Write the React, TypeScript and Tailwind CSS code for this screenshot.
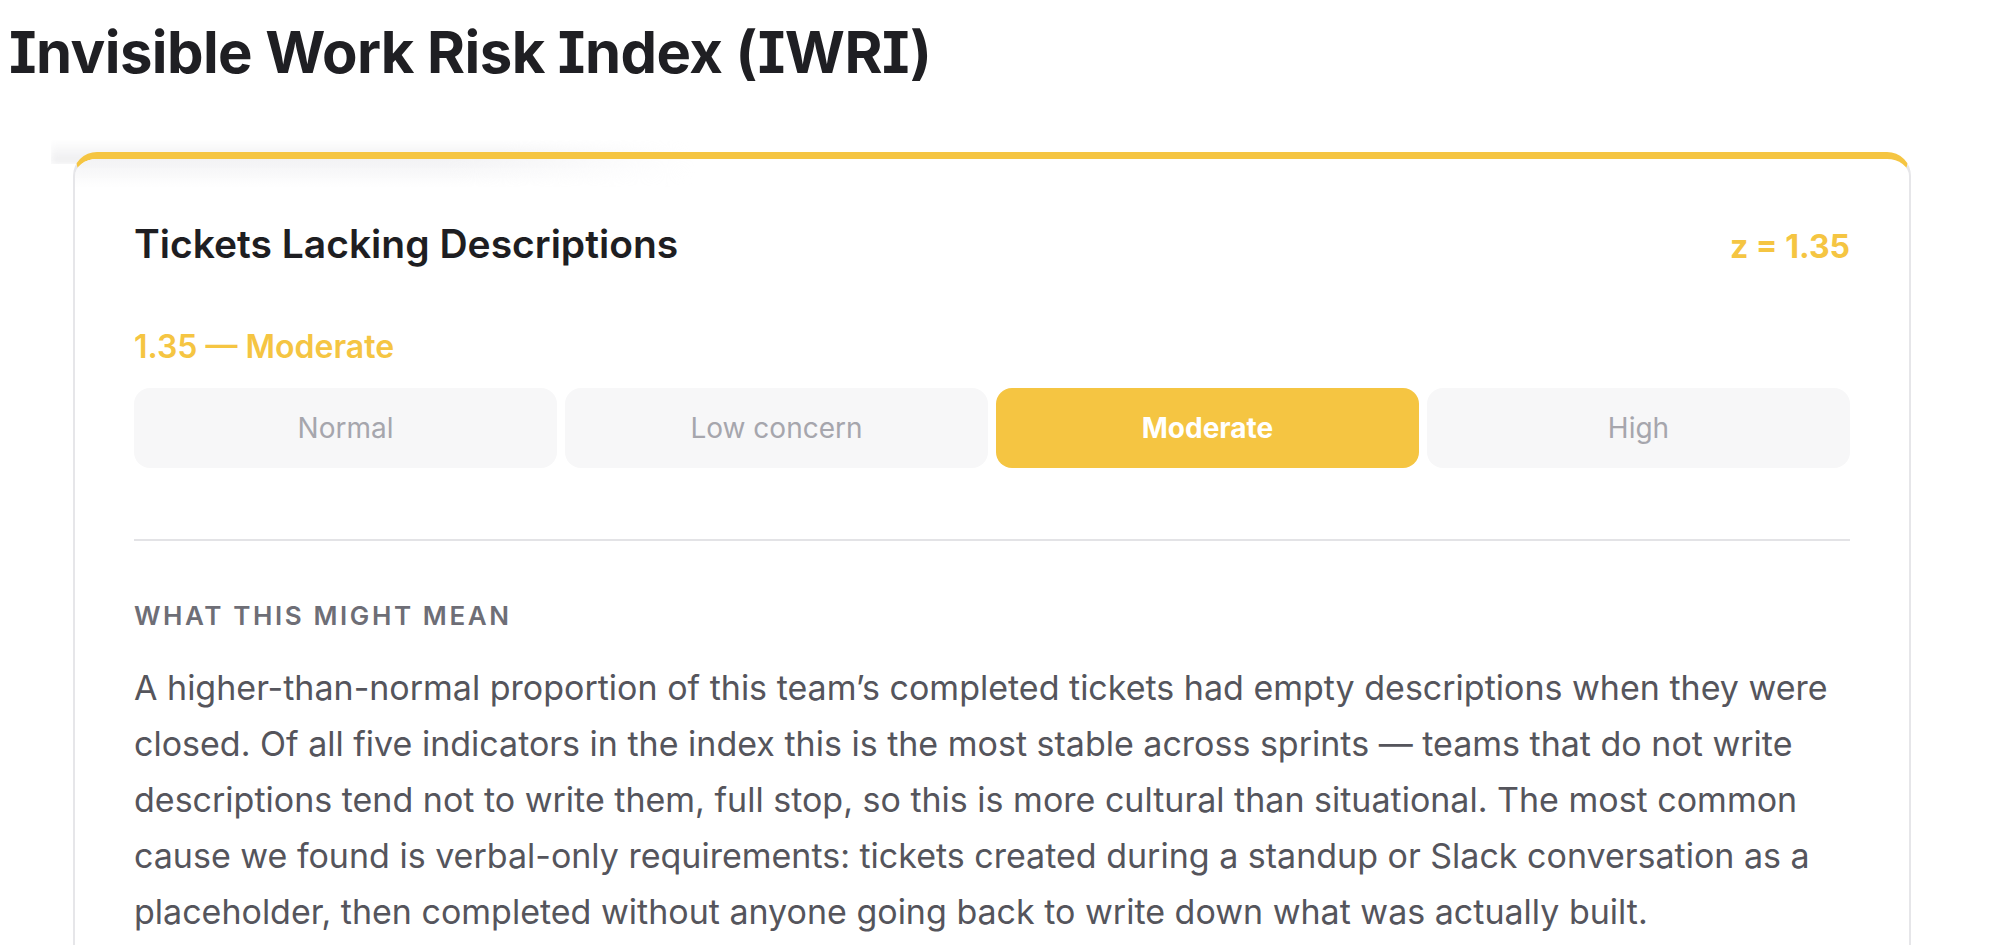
import React from "react";

// severity scale shown as a row of segments
const BANDS = ["Normal", "Low concern", "Moderate", "High"];

interface IIndicatorCardProps {
    title: string;
    z: number;
    band: string;
    lines: string[];
}

const IndicatorCard: React.FC<IIndicatorCardProps> = ({ title, z, band, lines }) => {
    return (
        <div className="relative w-[1838px] ml-[73px]">
            {/* soft haze behind the top edge */}
            <div className="absolute -top-[12px] -left-[22px] w-[640px] h-[24px] bg-linear-to-b from-transparent to-[#ececee] [mask-image:linear-gradient(to_right,black_70%,transparent)] blur-[3px]" />

            <div className="relative bg-white border-2 border-[#e6e6e9] border-t-[7px] border-t-[#f5c542] rounded-[24px] px-[59px] pt-[61px] pb-[80px] overflow-hidden">
                <div className="absolute top-0 left-0 w-[620px] h-[28px] bg-linear-to-b from-[#f2f2f4] to-transparent [mask-image:linear-gradient(to_right,black_60%,transparent)]" />

                {/* Header */}
                <div className="relative flex flex-row justify-between items-baseline">
                    <h2 className="text-[39px] leading-[48px] font-semibold text-[#1e1e22]">
                        {title}
                    </h2>
                    <span className="text-[32px] leading-[48px] font-bold text-[#f5c542]">
                        z = {z.toFixed(2)}
                    </span>
                </div>

                <div className="mt-[56px] text-[32px] leading-[40px] font-semibold text-[#f5c542]">
                    {z.toFixed(2)} — {band}
                </div>

                {/* Band segments */}
                <div className="mt-[21px] grid grid-cols-4 gap-[8px]">
                    {BANDS.map(b => (
                        <div
                            key={b}
                            className={
                                b === band
                                    ? "h-[80px] rounded-[16px] bg-[#f5c542] flex items-center justify-center text-[28px] font-bold text-white"
                                    : "h-[80px] rounded-[16px] bg-[#f7f7f8] flex items-center justify-center text-[28px] text-[#a6a6ad]"
                            }
                        >
                            {b}
                        </div>
                    ))}
                </div>

                <div className="mt-[71px] h-[2px] bg-[#e3e3e6]" />

                {/* Interpretation */}
                <div className="mt-[59px] text-[26px] leading-[32px] font-semibold tracking-[0.1em] text-[#6e6e76]">
                    WHAT THIS MIGHT MEAN
                </div>
                <p className="mt-[28px] text-[34px] leading-[56px] text-[#55555c]">
                    {lines.map((l, i) => (
                        <span key={i} className="block whitespace-nowrap">{l}</span>
                    ))}
                </p>
            </div>
        </div>
    );
};

export default function App() {
    return (
        <div className="min-h-screen bg-white font-['Inter','Noto_Sans',sans-serif] pt-[16px]">
            <h1 className="pl-[9px] text-[58px] leading-[72px] font-bold text-[#1f1f23] [font-feature-settings:'cv08'] tracking-[-0.01em]">
                Invisible Work Risk Index (IWRI)
            </h1>

            <div className="mt-[64px]">
                <IndicatorCard
                    title="Tickets Lacking Descriptions"
                    z={1.35}
                    band="Moderate"
                    lines={[
                        "A higher-than-normal proportion of this team\u2019s completed tickets had empty descriptions when they were",
                        "closed. Of all five indicators in the index this is the most stable across sprints \u2014 teams that do not write",
                        "descriptions tend not to write them, full stop, so this is more cultural than situational. The most common",
                        "cause we found is verbal-only requirements: tickets created during a standup or Slack conversation as a",
                        "placeholder, then completed without anyone going back to write down what was actually built.",
                    ]}
                />
            </div>
        </div>
    );
}
